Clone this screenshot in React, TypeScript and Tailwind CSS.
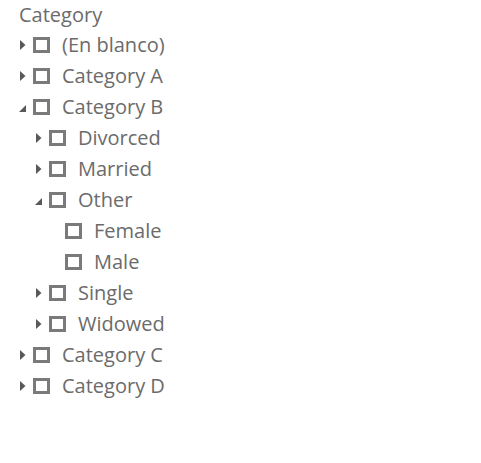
type Node = { label: string; level: 0 | 1 | 2; state: 'closed' | 'open' | 'leaf' }

const rows: Node[] = [
  { label: '(En blanco)', level: 0, state: 'closed' },
  { label: 'Category A', level: 0, state: 'closed' },
  { label: 'Category B', level: 0, state: 'open' },
  { label: 'Divorced', level: 1, state: 'closed' },
  { label: 'Married', level: 1, state: 'closed' },
  { label: 'Other', level: 1, state: 'open' },
  { label: 'Female', level: 2, state: 'leaf' },
  { label: 'Male', level: 2, state: 'leaf' },
  { label: 'Single', level: 1, state: 'closed' },
  { label: 'Widowed', level: 1, state: 'closed' },
  { label: 'Category C', level: 0, state: 'closed' },
  { label: 'Category D', level: 0, state: 'closed' },
]

const indent = ['pl-[20px]', 'pl-[36px]', 'pl-[52px]']

function Caret({ state }: { state: Node['state'] }) {
  if (state === 'leaf') return <span className="w-[13px] shrink-0" />
  return (
    <span className="flex w-[13px] shrink-0 items-center">
      {state === 'closed' ? (
        <svg width="6" height="10" viewBox="0 0 6 10">
          <path d="M0 0 L5.5 5 L0 10 Z" fill="#595959" />
        </svg>
      ) : (
        <svg width="7" height="7" viewBox="0 0 7 7" className="-ml-[1px] mt-[4px]">
          <path d="M7 0 L7 7 L0 7 Z" fill="#595959" />
        </svg>
      )}
    </span>
  )
}

function Row({ node }: { node: Node }) {
  return (
    <div className={`flex h-[31px] items-center ${indent[node.level]}`}>
      <Caret state={node.state} />
      <span className="h-[16px] w-[17px] shrink-0 border-[3px] border-[#7a7a7a] bg-white" />
      <span className="ml-[12px] whitespace-nowrap text-[20px] leading-none text-[#6b6b6b]">{node.label}</span>
    </div>
  )
}

export default function App() {
  return (
    <div className="h-[463px] w-[481px] bg-white font-['Open_Sans',sans-serif]">
      <div className="flex h-[29px] items-center pl-[19px] text-[20px] text-[#6b6b6b]">Category</div>
      {rows.map((n, i) => (
        <Row key={i} node={n} />
      ))}
    </div>
  )
}
